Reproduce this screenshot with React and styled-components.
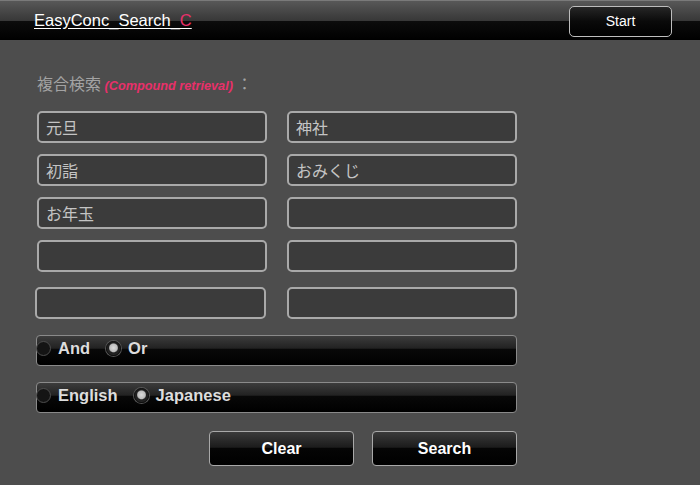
import styled, { createGlobalStyle } from "styled-components";

const Global = createGlobalStyle`
    html, body {
        margin: 0;
        padding: 0;
        background-color: #4d4d4d;
        font-family: "Liberation Sans", "Noto Sans CJK JP", Arial, sans-serif;
    }
`

const fields = [
    ["元旦", "神社"],
    ["初詣", "おみくじ"],
    ["お年玉", ""],
    ["", ""],
    ["", ""],
];

export default function App(){
    return(
        <>
            <Global />
            <Header>
                <Title>EasyConc_Search_<Pink>C</Pink></Title>
                <StartButton>Start</StartButton>
            </Header>
            <Main>
                <Label>
                    複合検索 <Note>(Compound retrieval)</Note> ：
                </Label>
                <Fields>
                    {fields.map((row, i) => (
                        <FieldRow key={i} $last={i === fields.length - 1}>
                            {row.map((v, j) => (
                                <Field key={j} defaultValue={v} $shift={i === fields.length - 1 && j === 0} />
                            ))}
                        </FieldRow>
                    ))}
                </Fields>
                <RadioBar>
                    <Option><Radio /> And</Option>
                    <Option><Radio $checked /> Or</Option>
                </RadioBar>
                <RadioBar>
                    <Option><Radio /> English</Option>
                    <Option><Radio $checked /> Japanese</Option>
                </RadioBar>
                <Actions>
                    <ActionButton>Clear</ActionButton>
                    <ActionButton>Search</ActionButton>
                </Actions>
            </Main>
        </>
    );
}

const Header = styled.div`
    height: 40px;
    box-sizing: border-box;
    display: flex;
    align-items: center;
    justify-content: space-between;
    padding: 0 28px 0 34px;
    border-top: 1px solid #7a7a7a;
    background: linear-gradient(
        to bottom,
        #585858 0%,
        #383838 50%,
        #0c0c0c 52%,
        #000000 100%
    );
`

const Title = styled.div`
    color: #ffffff;
    font-size: 16.5px;
    text-decoration: underline;
    text-underline-offset: 2px;
    margin-top: -1px;
`

const Pink = styled.span`
    color: #e8306a;
`

const StartButton = styled.div`
    width: 101px;
    height: 29px;
    border: 1px solid #bdbdbd;
    border-radius: 5px;
    background: linear-gradient(to bottom, #262626 0%, #0a0a0a 50%, #000 100%);
    color: #ffffff;
    font-size: 14px;
    display: flex;
    align-items: center;
    justify-content: center;
    margin-top: 1px;
`

const Main = styled.div`
    padding: 33px 0 0 37px;
    width: 481px;
`

const Label = styled.div`
    color: #a3a3a3;
    font-size: 16px;
    height: 20px;
    line-height: 20px;
    font-family: "Noto Sans CJK JP", sans-serif;
`

const Note = styled.span`
    color: #e8306a;
    font-family: "Liberation Sans", Arial, sans-serif;
    font-style: italic;
    font-weight: 700;
    font-size: 12.7px;
`

const Fields = styled.div`
    display: flex;
    flex-direction: column;
    gap: 11px;
    margin-top: 18px;
`

const FieldRow = styled.div`
    display: grid;
    grid-template-columns: 230px 230px;
    column-gap: 20px;
    margin-top: ${p => p.$last ? "4px" : "0"};
`

const Field = styled.input`
    box-sizing: border-box;
    height: 32px;
    width: ${p => p.$shift ? "231px" : "230px"};
    margin-left: ${p => p.$shift ? "-2px" : "0"};
    background-color: #3b3b3b;
    border: 2px solid #a9a9a9;
    border-radius: 5px;
    color: #c4c4c4;
    font-size: 16px;
    font-family: "Noto Sans CJK JP", sans-serif;
    padding: 0 0 0 7px;
    outline: none;
`

const RadioBar = styled.div`
    box-sizing: border-box;
    width: 481px;
    height: 31px;
    margin-left: -1px;
    margin-top: 16px;
    border: 1px solid #8a8a8a;
    border-radius: 4px;
    display: flex;
    align-items: flex-start;
    gap: 17px;
    padding: 2px 0 0 0;
    background: linear-gradient(
        to bottom,
        #3c3c3c 0%,
        #222222 42%,
        #080808 46%,
        #000000 100%
    );
`

const Option = styled.div`
    display: flex;
    align-items: center;
    gap: 7px;
    color: #dddddd;
    font-weight: 700;
    font-size: 16.5px;
    height: 20px;
`

const Radio = styled.span`
    box-sizing: border-box;
    width: 15px;
    height: 15px;
    border-radius: 50%;
    margin-left: -1px;
    border: 1px solid ${p => p.$checked ? "#111" : "#4e4e4e"};
    background: ${p => p.$checked
        ? "radial-gradient(circle at 50% 45%, #dcdcdc 0, #bdbdbd 3.8px, #1e1e1e 5px, #333 100%)"
        : "#141414"};
    box-shadow: ${p => p.$checked ? "0 0 0 1px #555" : "none"};
`

const Actions = styled.div`
    display: flex;
    justify-content: flex-end;
    gap: 18px;
    margin-top: 18px;
    padding-right: 1px;
`

const ActionButton = styled.div`
    box-sizing: border-box;
    width: 145px;
    height: 35px;
    border: 1px solid #a8a8a8;
    border-radius: 4px;
    background: linear-gradient(
        to bottom,
        #3a3a3a 0%,
        #1c1c1c 46%,
        #050505 50%,
        #000000 100%
    );
    color: #ffffff;
    font-weight: 700;
    font-size: 16px;
    display: flex;
    align-items: center;
    justify-content: center;
    cursor: pointer;

    &:hover {
        filter: brightness(1.2);
    }
`
